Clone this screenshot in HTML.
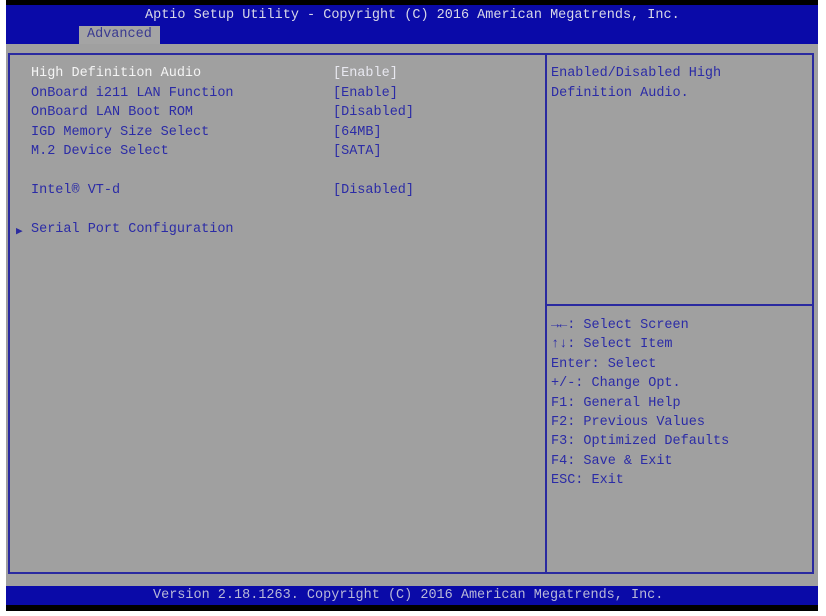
<!DOCTYPE html>
<html><head><style>
body{margin:0;width:826px;height:616px;background:#fff;position:relative;overflow:hidden;font-family:"Liberation Mono",monospace;font-size:13.5px;}
div{position:absolute;white-space:pre;}
.b{color:#2b2ba6;}
</style></head><body>
<div style="left:6px;top:0;width:812px;height:6px;background:#000"></div>
<div style="left:6px;top:5px;width:812px;height:39px;background:#0a0aa8"></div>
<div style="left:145px;top:8px;color:#d8d8e8;line-height:16px">Aptio Setup Utility - Copyright (C) 2016 American Megatrends, Inc.</div>
<div style="left:79px;top:26px;width:81px;height:18px;background:#a4a4a4"></div>
<div style="left:87px;top:27px;color:#3a3a90;line-height:16px">Advanced</div>
<div style="left:6px;top:44px;width:812px;height:542px;background:#a0a0a0"></div>
<div style="left:8px;top:53px;width:806px;height:521px;border:2px solid #2a2aa0;box-sizing:border-box"></div>
<div style="left:545px;top:53px;width:2px;height:521px;background:#2a2aa0"></div>
<div style="left:547px;top:304px;width:265px;height:2px;background:#2a2aa0"></div>
<div style="left:31px;top:64px;line-height:19.5px" class="b"><span style="color:#f4f4f4">High Definition Audio</span>
OnBoard i211 LAN Function
OnBoard LAN Boot ROM
IGD Memory Size Select
M.2 Device Select

Intel® VT-d

Serial Port Configuration</div>
<div style="left:16px;top:223px;line-height:19.5px;color:#2a2aa0;font-size:11px">▶</div>
<div style="left:333px;top:64px;line-height:19.5px;color:#e8e8f0">[Enable]</div>
<div style="left:333px;top:83.5px;line-height:19.5px" class="b">[Enable]
[Disabled]
[64MB]
[SATA]

[Disabled]</div>
<div style="left:551px;top:64px;line-height:19.5px" class="b">Enabled/Disabled High
Definition Audio.</div>
<div style="left:551px;top:316px;line-height:19.4px" class="b">→←: Select Screen
↑↓: Select Item
Enter: Select
+/-: Change Opt.
F1: General Help
F2: Previous Values
F3: Optimized Defaults
F4: Save &amp; Exit
ESC: Exit</div>
<div style="left:6px;top:586px;width:812px;height:19px;background:#0a0aa8"></div>
<div style="left:153px;top:587px;color:#b8b8d8;line-height:17px">Version 2.18.1263. Copyright (C) 2016 American Megatrends, Inc.</div>
<div style="left:6px;top:605px;width:812px;height:6px;background:#000"></div>
</body></html>
